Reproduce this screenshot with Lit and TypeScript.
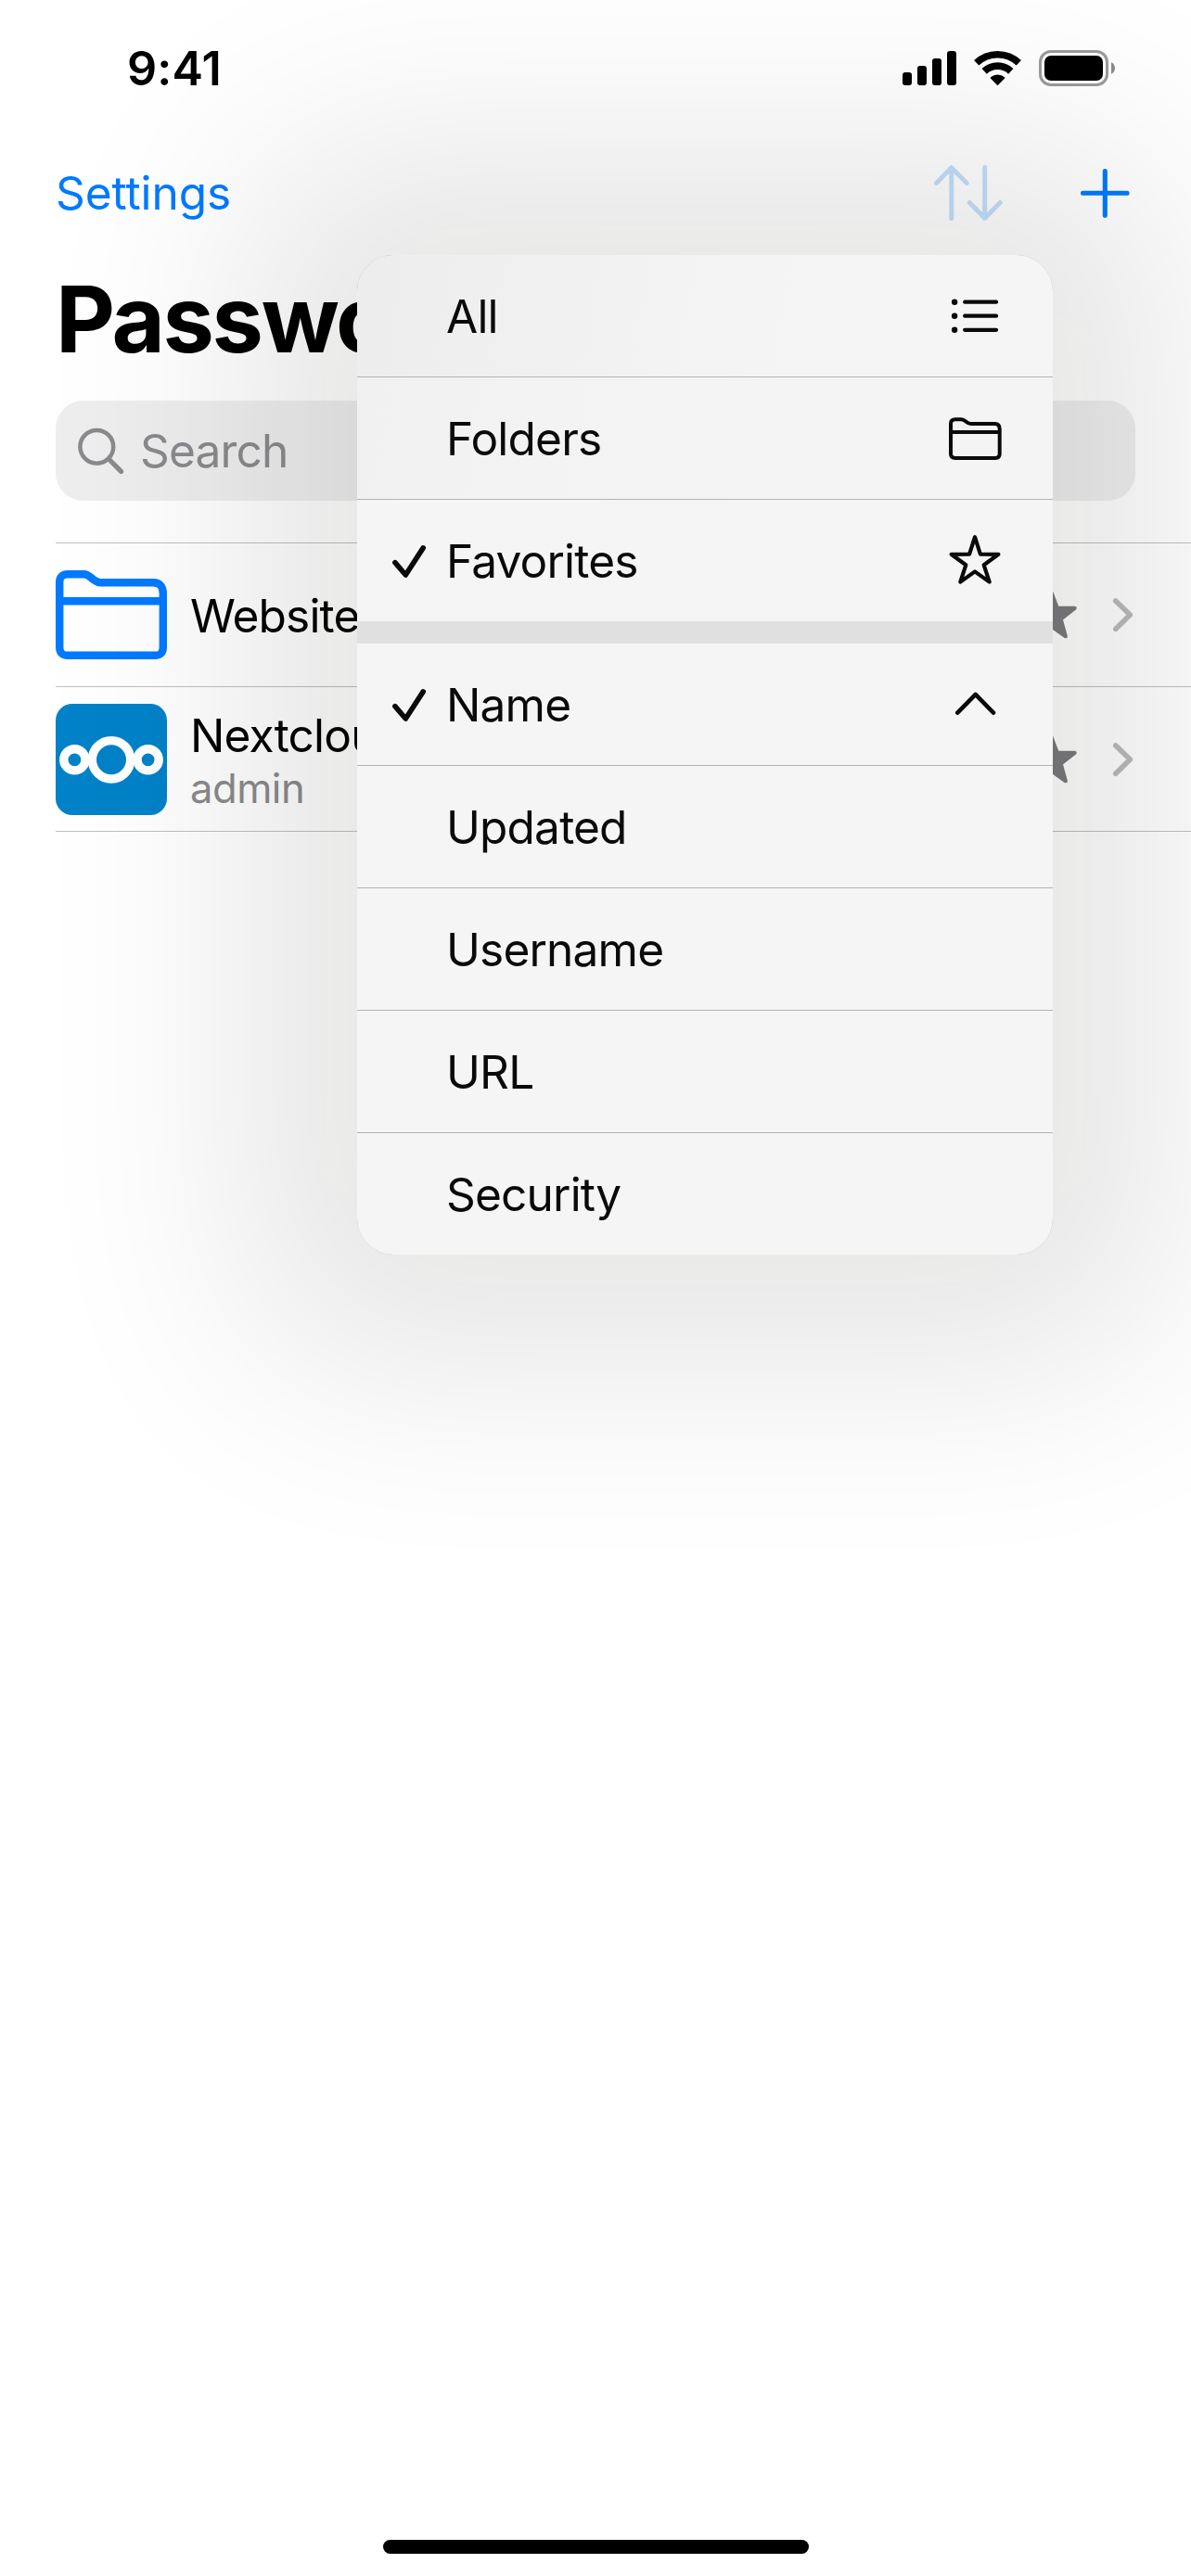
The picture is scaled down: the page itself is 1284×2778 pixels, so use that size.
import { LitElement, html, css, svg, nothing } from "lit";
import { customElement, property } from "lit/decorators.js";

type IconDef = { box: [number, number, number, number]; body: unknown };

const stroke = (d: string, w: number) => svg`<path d=${d} fill="none" stroke="currentColor"
  stroke-width=${w} stroke-linecap="round" stroke-linejoin="round"></path>`;

const icons: Record<string, IconDef> = {
  signal: {
    box: [0, 0, 58, 38],
    body: svg`<rect x="0" y="24" width="10" height="14" rx="3"></rect>
      <rect x="16" y="17" width="10" height="21" rx="3"></rect>
      <rect x="32" y="9" width="10" height="29" rx="3"></rect>
      <rect x="48" y="1" width="10" height="37" rx="3"></rect>`,
  },
  wifi: {
    box: [0, 0, 51, 38],
    body: svg`<path d="M2.7 13.8A33.2 33.2 0 0 1 48.3 13.8M11.2 22.9A20.8 20.8 0 0 1 39.8 22.9"
        fill="none" stroke="currentColor" stroke-width="7.7"></path>
      <path d="M25.5 37.2L18.4 29.9A11 11 0 0 1 32.6 29.9Z" stroke="currentColor"
        stroke-width="1.4" stroke-linejoin="round"></path>`,
  },
  battery: {
    box: [0, 0, 82, 39],
    body: svg`<rect x="1.5" y="1.5" width="72" height="36" rx="11.5" fill="none" stroke="#9b9b9a" stroke-width="3"></rect>
      <rect x="6" y="6" width="63" height="27" rx="7"></rect>
      <path d="M78 13.2C80.6 14.3 82 16.8 82 19.5C82 22.2 80.6 24.7 78 25.8Z" fill="#8b8b8a"></path>`,
  },
  sort: {
    box: [1007, 178, 74, 60],
    body: stroke("M1025.8 180.8V235.5M1009.5 197.4L1025.8 180.8L1042.2 197.4M1061.7 180.5V235.2M1045.3 218.5L1061.7 235.2L1078.2 218.5", 5),
  },
  plus: { box: [0, 0, 53, 53], body: stroke("M26.3 2.6V50.2M2.5 26.3H50.1", 5.1) },
  search: {
    box: [84, 461, 50, 51],
    body: svg`<circle cx="104.3" cy="481.8" r="17.9" fill="none" stroke="currentColor" stroke-width="4.5"></circle>
      ${stroke("M117.5 495.2L130.5 508.4", 5.2)}`,
  },
  folderLarge: {
    box: [60, 615, 120, 96],
    body: svg`<path d="M64.2 698V628Q64.2 619.2 73.5 619.2H90.5C97.5 619.2 100.5 628.3 108.5 628.3H165Q175.8 628.3 175.8 640V698Q175.8 706.8 167 706.8H73Q64.2 706.8 64.2 698Z"
        fill="none" stroke="currentColor" stroke-width="8.4"></path>
      <path d="M64 648.3H176" stroke="currentColor" stroke-width="8.4"></path>`,
  },
  nextcloud: {
    box: [60, 759, 120, 120],
    body: svg`<rect x="60" y="759" width="120" height="120" rx="18" fill="#0082c9"></rect>
      <g fill="none" stroke="#fff"><circle cx="120" cy="819.3" r="20.7" stroke-width="9.4"></circle>
      <circle cx="80.4" cy="819.3" r="11.6" stroke-width="9.4"></circle>
      <circle cx="159.6" cy="819.3" r="11.6" stroke-width="9.4"></circle></g>`,
  },
  starFilled: {
    box: [1105, 637, 57, 54],
    body: svg`<path d="M1133.5 640.2L1139.8 656.8H1158.6L1143.6 668.5L1148.8 687.2L1133.5 676.4L1118.2 687.2L1123.4 668.5L1108.4 656.8H1127.2Z"
      stroke="currentColor" stroke-width="4.2" stroke-linejoin="round"></path>`,
  },
  chevron: { box: [1200, 645, 21, 36], body: stroke("M1202.8 648L1218.3 663L1202.8 678.2", 5.6) },
  check: { box: [423, 588, 36, 36], body: stroke("M425.9 606.6L437.3 620L456.2 590.9", 5.6) },
  list: {
    box: [1026, 322, 50, 37],
    body: svg`<circle cx="1029.1" cy="325.7" r="3.2"></circle><circle cx="1029.1" cy="340.7" r="3.2"></circle>
      <circle cx="1029.1" cy="355.8" r="3.2"></circle>${stroke("M1040.2 325.7H1074M1040.2 340.7H1074M1040.2 355.8H1074", 4.3)}`,
  },
  folder: {
    box: [1023, 450, 57, 46],
    body: stroke("M1025 490V457Q1025 452.3 1030 452.3H1036.5C1041 452.3 1041.5 456.9 1046.5 456.9H1072.5Q1077.7 456.9 1077.7 462.5V489.5Q1077.7 493.9 1073 493.9H1030Q1025 493.9 1025 489.5ZM1025 466H1077.7", 4),
  },
  star: {
    box: [1023, 576, 56, 54],
    body: stroke("M1051 579.2L1056.9 597.6L1076.4 597.8L1060.7 609.3L1066.7 627.6L1051 616.4L1035.3 627.6L1041.3 609.3L1025.6 597.8L1045.1 597.6Z", 4.2),
  },
  up: { box: [1029, 746, 43, 25], body: stroke("M1031.3 768.7L1050.7 748.9L1070 768.7", 4.6) },
};

const icon = (name: string) => {
  const { box, body } = icons[name];
  return html`<svg class="icon ${name}" width=${box[2]} height=${box[3]} viewBox=${box.join(" ")} fill="currentColor">${body}</svg>`;
};

const shared = css`
  .icon { display: block; flex: none; overflow: visible; }
`;

@customElement("sort-menu")
export class SortMenu extends LitElement {
  static styles = [
    shared,
    css`
      :host {
        display: flex;
        flex-direction: column;
        gap: 24px;
        border-radius: 39px;
        overflow: hidden;
        background: #e0e0e0;
        color: #0a0a0a;
      }
      .group { display: flex; flex-direction: column; gap: 1px; background: #b3b3b3; }
      .item {
        display: flex;
        align-items: center;
        height: 131px;
        padding-left: 38px;
        background: #f5f5f5;
      }
      .all { background: linear-gradient(100deg, #ededed, #f1f1f1 32%, #f5f5f5 62%); }
      .folders { background: linear-gradient(100deg, #f1f1f1, #f3f3f3 30%, #f4f4f4 62%); }
      .mark { width: 58px; flex: none; }
      .label { flex: 1; line-height: 60px; white-space: nowrap; }
      .trail { width: 168px; display: flex; justify-content: center; }
      .star { margin-top: -3px; }
      .check { margin-top: 2px; }
      .up { margin-top: -2px; }
    `,
  ];

  private row(label: string, trail = "", checked = false) {
    return html`<div class="item ${label.toLowerCase()}">
      <div class="mark">${checked ? icon("check") : nothing}</div>
      <div class="label">${label}</div>
      <div class="trail">${trail ? icon(trail) : nothing}</div>
    </div>`;
  }

  render() {
    return html`
      <div class="group">
        ${this.row("All", "list")}${this.row("Folders", "folder")}${this.row("Favorites", "star", true)}
      </div>
      <div class="group">
        ${this.row("Name", "up", true)}${["Updated", "Username", "URL", "Security"].map((l) => this.row(l))}
      </div>
    `;
  }
}

@customElement("entry-row")
export class EntryRow extends LitElement {
  @property() icon = "";
  @property() label = "";
  @property() detail = "";

  static styles = [
    shared,
    css`
      :host { display: flex; align-items: center; padding-right: 63px; }
      .text { flex: 1; margin-left: 25px; padding-top: 1px; white-space: nowrap; }
      .label { line-height: 60px; }
      .detail {
        font-size: 43.6px;
        line-height: 55px;
        margin-bottom: -2px;
        color: #8a8a8e;
        letter-spacing: -0.5px;
      }
      .folderLarge { color: #007aff; }
      .starFilled { color: #7b7b7f; margin-right: 38px; }
      .chevron { color: #bababc; }
    `,
  ];

  render() {
    return html`
      ${icon(this.icon)}
      <div class="text">
        <div class="label">${this.label}</div>
        ${this.detail ? html`<div class="detail">${this.detail}</div>` : nothing}
      </div>
      ${icon("starFilled")}${icon("chevron")}
    `;
  }
}

@customElement("app-root")
export class AppRoot extends LitElement {
  static styles = [
    shared,
    css`
      :host {
        display: flex;
        flex-direction: column;
        position: relative;
        width: 1284px;
        height: 2778px;
        overflow: hidden;
        background: #fff;
        color: #000;
        font-family: Inter, "Liberation Sans", sans-serif;
        font-size: 49.6px;
        letter-spacing: -0.84px;
      }
      .status {
        display: flex;
        align-items: center;
        gap: 19px;
        height: 146px;
        padding: 0 82px 0 137px;
        box-sizing: border-box;
      }
      .time { flex: 1; font-weight: 600; font-size: 50.3px; letter-spacing: 0.1px; }
      .nav {
        display: flex;
        align-items: center;
        height: 124px;
        padding: 0 66px 0 60px;
        color: #007aff;
      }
      .settings { flex: 1; letter-spacing: -0.1px; }
      .sort { color: #c4dffb; margin-right: 84px; }
      .title {
        margin: 0;
        padding-left: 60px;
        font-size: 99px;
        font-weight: 700;
        line-height: 149px;
        letter-spacing: -2.4px;
      }
      .field {
        display: flex;
        align-items: center;
        gap: 17px;
        height: 108px;
        margin: 13px 60px 45px;
        padding-left: 24px;
        box-sizing: border-box;
        border-radius: 30px;
        background: #eeeeef;
        color: #8a8a8e;
      }
      .list {
        display: flex;
        flex-direction: column;
        margin-left: 60px;
        border-top: 1px solid #bfbfc1;
      }
      .entry { height: 154px; border-bottom: 1px solid #bfbfc1; }
      .entry.tall { height: 155px; }
      .home {
        width: 459px;
        height: 15px;
        margin: auto auto 24px 413px;
        border-radius: 8px;
        background: #000;
      }
      .menu {
        position: absolute;
        left: 385px;
        top: 275px;
        width: 750px;
      }
      .shade {
        position: absolute;
        left: 261px;
        top: 151px;
        width: 998px;
        height: 1326px;
        background: #0c0c00;
        border-radius: 120px;
        filter: blur(116px);
        opacity: 0.098;
      }
    `,
  ];

  render() {
    return html`
      <div class="status">
        <div class="time">9:41</div>
        ${icon("signal")}${icon("wifi")}${icon("battery")}
      </div>
      <div class="nav">
        <div class="settings">Settings</div>
        ${icon("sort")}${icon("plus")}
      </div>
      <h1 class="title">Passwords</h1>
      <div class="field">${icon("search")}<div>Search</div></div>
      <div class="list">
        <entry-row class="entry" icon="folderLarge" label="Websites"></entry-row>
        <entry-row class="entry tall" icon="nextcloud" label="Nextcloud" detail="admin"></entry-row>
      </div>
      <div class="home"></div>
      <div class="shade"></div>
      <sort-menu class="menu"></sort-menu>
    `;
  }
}
